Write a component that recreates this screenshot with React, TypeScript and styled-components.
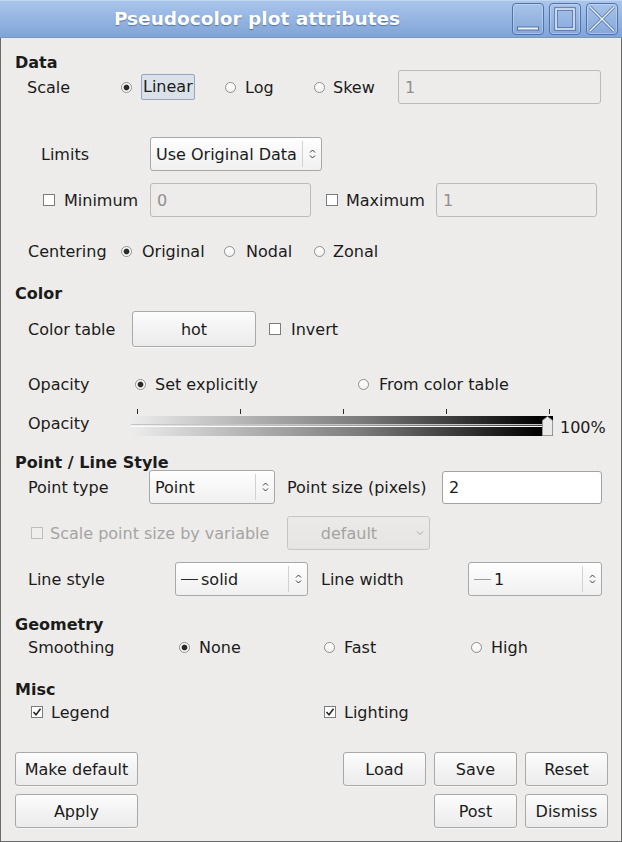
import React from "react";
import styled, { createGlobalStyle } from "styled-components";

const Global = createGlobalStyle`
  html, body { margin: 0; padding: 0; background: #edecea; }
  body { font-family: "DejaVu Sans", "Liberation Sans", sans-serif; font-size: 16px; color: #1b1b1b; }
  * { box-sizing: border-box; }
`;

const Window = styled.div`
  width: 622px;
  height: 842px;
  display: flex;
  flex-direction: column;
  background: #edecea;
  border: 1px solid #6a6a6a;
  border-top: none;
`;

const TitleBar = styled.div`
  height: 38px;
  margin: 0 -1px;
  display: flex;
  align-items: flex-start;
  background: linear-gradient(#a9c5ec, #80a4d7);
  border-top: 1px solid #c3d6f1;
  border-bottom: 1px solid #7595c6;
  padding-right: 4px;
`;

const Title = styled.div`
  flex: 1;
  text-align: center;
  font-weight: bold;
  font-size: 18.5px;
  line-height: 36px;
  color: #ffffff;
  text-shadow: 0 1px 1px rgba(40, 65, 110, 0.55);
  padding-left: 2px;
`;

const WinButtons = styled.div`
  display: flex;
  gap: 5px;
  margin-top: 2px;
`;

const WinButton = styled.div`
  width: 32px;
  height: 32px;
  border: 1px solid #5072a8;
  border-radius: 4px;
  background: linear-gradient(#a7c3ea, #86a8d9);
  box-shadow: inset 0 0 0 1px rgba(255, 255, 255, 0.28);
  display: flex;
  align-items: center;
  justify-content: center;
`;

const Body = styled.div`
  flex: 1;
  display: flex;
  flex-direction: column;
  padding: 0 13px 0 14px;
`;

const Row = styled.div<{ $mt: number; $h: number }>`
  display: flex;
  align-items: center;
  height: ${(p) => p.$h}px;
  margin-top: ${(p) => p.$mt}px;
  flex: 0 0 auto;
`;

const Header = styled.div<{ $mt: number }>`
  font-weight: bold;
  height: 20px;
  line-height: 20px;
  margin-top: ${(p) => p.$mt}px;
  flex: 0 0 auto;
`;

const Label = styled.div<{ $w: number; $pl?: number; $disabled?: boolean }>`
  flex: 0 0 ${(p) => p.$w}px;
  padding-left: ${(p) => p.$pl ?? 13}px;
  white-space: nowrap;
  color: ${(p) => (p.$disabled ? "#a4a4a4" : "inherit")};
  display: flex;
  align-items: center;
`;

const Option = styled.div<{ $w?: number; $gap?: number; $pl?: number; $disabled?: boolean }>`
  display: flex;
  align-items: center;
  flex: ${(p) => (p.$w ? `0 0 ${p.$w}px` : "0 0 auto")};
  gap: ${(p) => p.$gap ?? 9}px;
  padding-left: ${(p) => p.$pl ?? 0}px;
  white-space: nowrap;
  color: ${(p) => (p.$disabled ? "#a4a4a4" : "inherit")};
`;

const RadioCircle = styled.span<{ $on?: boolean }>`
  width: 11px;
  height: 11px;
  border-radius: 50%;
  border: 1px solid #8e8e8e;
  background: ${(p) =>
    p.$on
      ? "radial-gradient(circle, #2a2a2a 0 2.3px, #8a8a8a 2.8px, #ffffff 3.4px)"
      : "linear-gradient(#ffffff, #f1f1f1)"};
  flex: 0 0 auto;
`;

const CheckBox = styled.span<{ $disabled?: boolean }>`
  width: 12px;
  height: 12px;
  border: 1px solid ${(p) => (p.$disabled ? "#bdbdbd" : "#7c7c7c")};
  background: ${(p) => (p.$disabled ? "#efeeec" : "#ffffff")};
  flex: 0 0 auto;
  display: flex;
  align-items: center;
  justify-content: center;
`;

const FocusText = styled.span`
  background: #dbe1e9;
  border: 1px solid #94a6be;
  border-radius: 2px;
  padding: 0 1px;
  height: 26px;
  line-height: 24px;
`;

const TextBox = styled.div<{ $w: number; $h?: number; $enabled?: boolean }>`
  flex: 0 0 ${(p) => p.$w}px;
  height: ${(p) => p.$h ?? 34}px;
  border: 1px solid ${(p) => (p.$enabled ? "#a2a2a2" : "#bababa")};
  border-radius: 3px;
  background: ${(p) => (p.$enabled ? "#ffffff" : "transparent")};
  color: ${(p) => (p.$enabled ? "#1b1b1b" : "#8f8f8f")};
  padding-left: 6px;
  display: flex;
  align-items: center;
`;

const Select = styled.div<{ $w: number; $disabled?: boolean }>`
  flex: 0 0 ${(p) => p.$w}px;
  height: 34px;
  border: 1px solid ${(p) => (p.$disabled ? "#c6c6c6" : "#a8a8a8")};
  border-radius: 3px;
  background: ${(p) =>
    p.$disabled ? "linear-gradient(#eceae8, #e6e5e3)" : "linear-gradient(#fefefe, #f0f0f0)"};
  color: ${(p) => (p.$disabled ? "#a3a3a3" : "#1b1b1b")};
  display: flex;
  align-items: center;
  white-space: nowrap;
`;

const SelectText = styled.span<{ $center?: boolean }>`
  flex: 1;
  padding-left: ${(p) => (p.$center ? 0 : 5)}px;
  overflow: hidden;
  display: flex;
  align-items: center;
  justify-content: ${(p) => (p.$center ? "center" : "flex-start")};
`;

const SelectArrow = styled.span<{ $sep?: boolean }>`
  flex: 0 0 19px;
  height: 26px;
  border-left: ${(p) => (p.$sep ? "1px solid #d2d2d2" : "none")};
  display: flex;
  align-items: center;
  justify-content: center;
`;

const Dash = styled.span<{ $light?: boolean }>`
  width: 17px;
  height: 1px;
  background: ${(p) => (p.$light ? "#9a9a9a" : "#2a2a2a")};
  margin-right: 3px;
  flex: 0 0 auto;
`;

const Button = styled.div<{ $w: number; $h?: number }>`
  flex: 0 0 ${(p) => p.$w}px;
  height: ${(p) => p.$h ?? 34}px;
  border: 1px solid #a9a9a9;
  border-radius: 3px;
  background: linear-gradient(#fcfcfc, #ebebeb);
  box-shadow: 0 1px 0 rgba(255, 255, 255, 0.6);
  display: flex;
  align-items: center;
  justify-content: center;
  white-space: nowrap;
`;

const Spacer = styled.div`
  flex: 1;
`;

const ButtonGroup = styled.div`
  display: flex;
  gap: 8px;
`;

const SliderRow = styled.div`
  display: flex;
  height: 36px;
  margin-top: 9px;
  flex: 0 0 auto;
`;

const SliderLabel = styled(Label)`
  align-self: center;
`;

const Slider = styled.div`
  width: 422px;
  padding-top: 4px;
  display: flex;
  flex-direction: column;
`;

const Ticks = styled.div`
  height: 5px;
  display: flex;
  justify-content: space-between;
  padding: 0 3px 0 6px;
`;

const Tick = styled.span`
  width: 1px;
  height: 5px;
  background: #2b2b2b;
`;

const Track = styled.div`
  position: relative;
  height: 20px;
  margin-top: 2px;
  background: linear-gradient(to right, #ececec, #7a7a7a 55%, #000000 97%);
`;

const Groove = styled.div`
  position: absolute;
  left: 0;
  right: 9px;
  top: 8px;
  height: 3px;
  border-top: 1px solid #c4c4c4;
  border-bottom: 1px solid #fbfbfb;
  background: rgba(255, 255, 255, 0.25);
`;

const Handle = styled.svg`
  position: absolute;
  right: 0;
  top: 0;
`;

const Percent = styled.div`
  align-self: flex-end;
  margin: 0 0 3px 7px;
  line-height: 20px;
`;

const Arrows = () => (
  <svg width="7" height="12" viewBox="0 0 7 12">
    <path d="M1 4.5 L3.5 2 L6 4.5" fill="none" stroke="#3a3a3a" strokeWidth="1" />
    <path d="M1 7.5 L3.5 10 L6 7.5" fill="none" stroke="#3a3a3a" strokeWidth="1" />
  </svg>
);

const DownChevron = () => (
  <svg width="8" height="6" viewBox="0 0 8 6">
    <path d="M1 1.5 L4 4.5 L7 1.5" fill="none" stroke="#a6a6a6" strokeWidth="1" />
  </svg>
);

const Check = () => (
  <svg width="10" height="10" viewBox="0 0 10 10">
    <path d="M1.5 5 L4 7.8 L8.5 1.8" fill="none" stroke="#222" strokeWidth="1.5" />
  </svg>
);

const Radio = ({ on, w, gap, label }: { on?: boolean; w?: number; gap?: number; label: React.ReactNode }) => (
  <Option $w={w} $gap={gap}>
    <RadioCircle $on={on} />
    {label}
  </Option>
);

const CheckOpt = ({
  checked,
  w,
  gap,
  pl,
  disabled,
  label,
}: {
  checked?: boolean;
  w?: number;
  gap?: number;
  pl?: number;
  disabled?: boolean;
  label: string;
}) => (
  <Option $w={w} $gap={gap} $pl={pl} $disabled={disabled}>
    <CheckBox $disabled={disabled}>{checked && <Check />}</CheckBox>
    {label}
  </Option>
);

const Combo = ({ w, children }: { w: number; children: React.ReactNode }) => (
  <Select $w={w}>
    <SelectText>{children}</SelectText>
    <SelectArrow $sep>
      <Arrows />
    </SelectArrow>
  </Select>
);

const WinIcon = ({ kind }: { kind: "min" | "max" | "close" }) => (
  <svg width="30" height="30" viewBox="0 0 30 30">
    {kind === "min" && (
      <rect x="4.5" y="23" width="21" height="3" fill="#f3f7fd" stroke="#4f71a8" strokeWidth="1" />
    )}
    {kind === "max" && (
      <>
        <rect x="6" y="5" width="18" height="20" fill="none" stroke="#4f71a8" strokeWidth="3.5" />
        <rect x="6" y="5" width="18" height="20" fill="none" stroke="#f3f7fd" strokeWidth="1.5" />
      </>
    )}
    {kind === "close" && (
      <>
        <path d="M3 3 L27 27 M27 3 L3 27" stroke="#4f71a8" strokeWidth="3" />
        <path d="M3 3 L27 27 M27 3 L3 27" stroke="#f3f7fd" strokeWidth="1.4" />
      </>
    )}
  </svg>
);

export default function App() {
  return (
    <>
      <Global />
      <Window>
        <TitleBar>
          <Title>Pseudocolor plot attributes</Title>
          <WinButtons>
            <WinButton>
              <WinIcon kind="min" />
            </WinButton>
            <WinButton>
              <WinIcon kind="max" />
            </WinButton>
            <WinButton>
              <WinIcon kind="close" />
            </WinButton>
          </WinButtons>
        </TitleBar>
        <Body>
          <Header $mt={15}>Data</Header>
          <Row $mt={-3} $h={34}>
            <Label $w={106} $pl={12}>Scale</Label>
            <Radio on w={104} label={<FocusText>Linear</FocusText>} />
            <Radio w={89} label="Log" />
            <Radio w={84} gap={8} label="Skew" />
            <TextBox $w={203}>1</TextBox>
          </Row>
          <Row $mt={33} $h={34}>
            <Label $w={135} $pl={26}>Limits</Label>
            <Combo w={172}>Use Original Data</Combo>
          </Row>
          <Row $mt={12} $h={34}>
            <CheckOpt w={135} pl={28} label="Minimum" />
            <TextBox $w={161}>0</TextBox>
            <CheckOpt w={125} pl={15} gap={8} label="Maximum" />
            <TextBox $w={161}>1</TextBox>
          </Row>
          <Row $mt={22} $h={24}>
            <Label $w={106}>Centering</Label>
            <Radio on w={103} gap={10} label="Original" />
            <Radio w={90} gap={11} label="Nodal" />
            <Radio gap={8} label="Zonal" />
          </Row>
          <Header $mt={21}>Color</Header>
          <Row $mt={7} $h={36}>
            <Label $w={117}>Color table</Label>
            <Button $w={124} $h={36}>hot</Button>
            <CheckOpt pl={13} gap={10} label="Invert" />
          </Row>
          <Row $mt={25} $h={24}>
            <Label $w={120}>Opacity</Label>
            <Radio on w={223} label="Set explicitly" />
            <Radio gap={10} label="From color table" />
          </Row>
          <SliderRow>
            <SliderLabel $w={116}>Opacity</SliderLabel>
            <Slider>
              <Ticks>
                <Tick />
                <Tick />
                <Tick />
                <Tick />
                <Tick />
              </Ticks>
              <Track>
                <Groove />
                <Handle width="11" height="20" viewBox="0 0 11 20">
                  <polygon
                    points="0.5,4.5 5.5,0.5 10.5,4.5 10.5,19.5 0.5,19.5"
                    fill="#e9e9e9"
                    stroke="#979797"
                    strokeWidth="1"
                  />
                </Handle>
              </Track>
            </Slider>
            <Percent>100%</Percent>
          </SliderRow>
          <Header $mt={12}>Point / Line Style</Header>
          <Row $mt={-3} $h={34}>
            <Label $w={134}>Point type</Label>
            <Combo w={126}>Point</Combo>
            <Label $w={167} $pl={12}>Point size (pixels)</Label>
            <TextBox $w={160} $h={33} $enabled>
              2
            </TextBox>
          </Row>
          <Row $mt={12} $h={34}>
            <CheckOpt w={272} pl={16} gap={7} disabled label="Scale point size by variable" />
            <Select $w={143} $disabled>
              <SelectText $center>default</SelectText>
              <SelectArrow>
                <DownChevron />
              </SelectArrow>
            </Select>
          </Row>
          <Row $mt={12} $h={34}>
            <Label $w={160}>Line style</Label>
            <Combo w={133}>
              <Dash />
              solid
            </Combo>
            <Label $w={160}>Line width</Label>
            <Combo w={134}>
              <Dash $light />1
            </Combo>
          </Row>
          <Header $mt={19}>Geometry</Header>
          <Row $mt={0} $h={24}>
            <Label $w={164}>Smoothing</Label>
            <Radio on w={145} label="None" />
            <Radio w={147} label="Fast" />
            <Radio label="High" />
          </Row>
          <Header $mt={21}>Misc</Header>
          <Row $mt={0} $h={24}>
            <CheckOpt checked w={309} pl={16} gap={8} label="Legend" />
            <CheckOpt checked gap={8} label="Lighting" />
          </Row>
          <Row $mt={28} $h={34}>
            <Button $w={123}>Make default</Button>
            <Spacer />
            <ButtonGroup>
              <Button $w={83}>Load</Button>
              <Button $w={83}>Save</Button>
              <Button $w={83}>Reset</Button>
            </ButtonGroup>
          </Row>
          <Row $mt={8} $h={34}>
            <Button $w={123}>Apply</Button>
            <Spacer />
            <ButtonGroup>
              <Button $w={83}>Post</Button>
              <Button $w={83}>Dismiss</Button>
            </ButtonGroup>
          </Row>
        </Body>
      </Window>
    </>
  );
}
